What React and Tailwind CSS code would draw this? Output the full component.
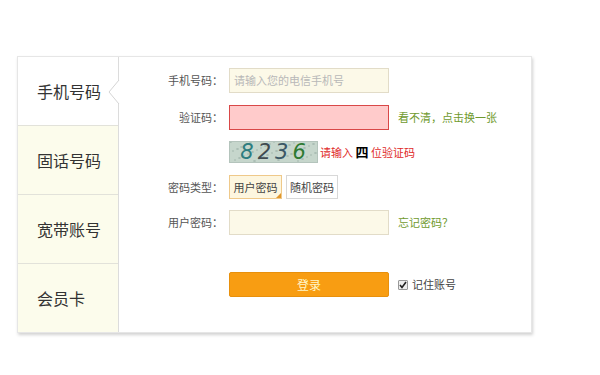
import React from 'react';

const cjk = { fontFamily: '"Microsoft YaHei", "Noto Sans CJK SC", "Noto Sans", sans-serif' };

const tabs = ['手机号码', '固话号码', '宽带账号', '会员卡'];

const Captcha = () => (
  <div className="relative w-[89px] h-[22px] bg-[#c6d6cc] border border-[#b4c4bc] flex items-center justify-center">
    <svg className="absolute inset-0" width="87" height="20">
      {Array.from({ length: 60 }).map((_, i) => (
        <circle key={i} cx={(i * 37) % 87} cy={(i * 13) % 20} r="0.8" fill="#9fb4aa" />
      ))}
    </svg>
    <span
      className="relative italic text-[21px] leading-[20px] tracking-[4px] pl-[3px]"
      style={{ fontFamily: '"DejaVu Sans", sans-serif' }}
    >
      <span className="text-[#2d7d80]">8</span>
      <span className="text-[#3f4a50]">2</span>
      <span className="text-[#3b5866]">3</span>
      <span className="text-[#2e7a32]">6</span>
    </span>
  </div>
);

const Row = ({ label, children, className }) => (
  <div className={`flex items-center ${className}`}>
    <div className="w-[110px] text-right pr-[6px] text-[11px] text-[#555]">{label}</div>
    {children}
  </div>
);

export default function App() {
  return (
    <div className="w-[600px] h-[375px] bg-white pt-[56px] pl-[17px]" style={cjk}>
      <div className="flex w-[515px] h-[277px] border border-[#e6e6e6] shadow-[1px_2px_3px_rgba(0,0,0,0.18)]">
        <div className="w-[101px] flex flex-col border-r border-[#dcdcdc]">
          {tabs.map((t, i) => (
            <div
              key={t}
              className={`relative flex-1 flex items-center pl-[19px] text-[16px] text-[#333] ${
                i === 0 ? 'bg-white' : 'bg-[#fcfcec] border-t border-[#e2e2da]'
              }`}
            >
              {t}
              {i === 0 && (
                <svg className="absolute right-[-2px] top-[23px]" width="12" height="24" viewBox="0 0 12 24">
                  <polygon points="11,0 1,12 11,24 12,24 12,0" fill="#fff" />
                  <polyline points="11,0 1,12 11,24" fill="none" stroke="#d4d4d4" strokeWidth="1" />
                </svg>
              )}
            </div>
          ))}
        </div>
        <div className="flex-1 flex flex-col pt-[11px] bg-white">
          <Row label="手机号码：">
            <div className="w-[160px] h-[25px] bg-[#fcf9e8] border border-[#e2dcc8] flex items-center pl-[4px] text-[11px] text-[#b8b8b8]">
              请输入您的电信手机号
            </div>
          </Row>
          <Row label="验证码：" className="mt-[12px]">
            <div className="w-[160px] h-[25px] bg-[#ffcbcb] border border-[#d94848]" />
            <span className="ml-[9px] text-[11px] text-[#6f9a2e]">看不清，点击换一张</span>
          </Row>
          <Row label="" className="mt-[11px]">
            <Captcha />
            <span className="ml-[2px] text-[11px] text-[#e02a2a]">
              请输入 <span className="font-bold text-[13px] text-black">四</span> 位验证码
            </span>
          </Row>
          <Row label="密码类型：" className="mt-[12px]">
            <div className="relative w-[53px] h-[24px] bg-[#fdf6df] border border-[#efc98a] flex items-center justify-center text-[11px] text-[#444]">
              用户密码
              <span className="absolute right-0 bottom-0 w-0 h-0 border-l-[5px] border-l-transparent border-b-[5px] border-b-[#e0962c]" />
            </div>
            <div className="ml-[4px] w-[52px] h-[24px] bg-white border border-[#d8d8d8] flex items-center justify-center text-[11px] text-[#444]">
              随机密码
            </div>
          </Row>
          <Row label="用户密码：" className="mt-[11px]">
            <div className="w-[160px] h-[25px] bg-[#fcf9e8] border border-[#e2dcc8]" />
            <span className="ml-[9px] text-[11px] text-[#6f9a2e]">忘记密码？</span>
          </Row>
          <Row label="" className="mt-[37px]">
            <div className="w-[160px] h-[25px] bg-[#f89d12] border border-[#e8900c] rounded-[2px] flex items-center justify-center text-[12px] text-[#fff6c8]">
              登录
            </div>
            <span className="ml-[9px] w-[10px] h-[10px] border border-[#999] bg-[#eee] rounded-[1px] flex items-center justify-center">
              <svg width="8" height="8" viewBox="0 0 8 8">
                <polyline points="1,4 3,6.5 7,1" fill="none" stroke="#222" strokeWidth="1.6" />
              </svg>
            </span>
            <span className="ml-[4px] text-[11px] text-[#444]">记住账号</span>
          </Row>
        </div>
      </div>
    </div>
  );
}
